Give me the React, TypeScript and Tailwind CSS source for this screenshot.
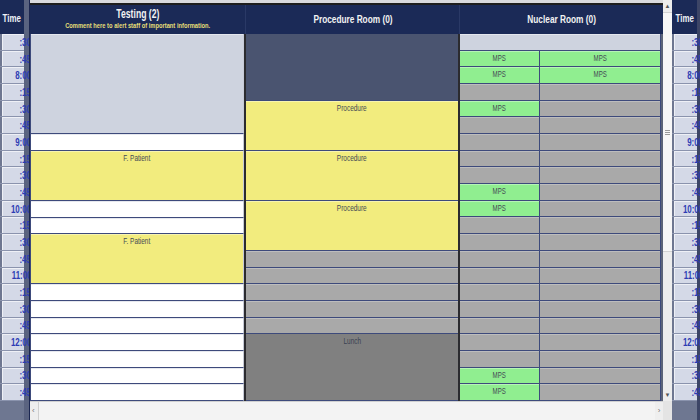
import React from "react";

type Kind = "idle" | "open" | "appt" | "blocked" | "closed" | "lunch" | "mps";
type Block = { span: number; kind: Kind; label?: string };

const TIMES = [":30", ":45", "8:00", ":15", ":30", ":45", "9:00", ":15", ":30", ":45", "10:00", ":15", ":30", ":45", "11:00", ":15", ":30", ":45", "12:00", ":15", ":30", ":45"];

const KIND_CLASS: Record<Kind, string> = {
  idle: "bg-[#ced3df] shadow-[inset_0_1px_0_#e4e7ee]",
  open: "bg-white shadow-[inset_0_1px_0_#e6e8ee]",
  appt: "bg-[#f2ec7e] shadow-[inset_0_1px_0_#f8f4b0]",
  blocked: "bg-[#4a5470]",
  closed: "bg-[#a9a9a9] shadow-[inset_0_1px_0_#bdbdbd]",
  lunch: "bg-[#808080]",
  mps: "bg-[#90ee90] shadow-[inset_0_1px_0_#b6f5b6]",
};

const SPAN_CLASS: Record<number, string> = {
  1: "row-span-1",
  3: "row-span-3",
  4: "row-span-4",
  6: "row-span-6",
};

const testing: Block[] = [
  { span: 6, kind: "idle" },
  { span: 1, kind: "open" },
  { span: 3, kind: "appt", label: "F. Patient" },
  { span: 1, kind: "open" },
  { span: 1, kind: "open" },
  { span: 3, kind: "appt", label: "F. Patient" },
  ...Array.from({ length: 7 }, (): Block => ({ span: 1, kind: "open" })),
];

const procedure: Block[] = [
  { span: 4, kind: "blocked" },
  { span: 3, kind: "appt", label: "Procedure" },
  { span: 3, kind: "appt", label: "Procedure" },
  { span: 3, kind: "appt", label: "Procedure" },
  ...Array.from({ length: 5 }, (): Block => ({ span: 1, kind: "closed" })),
  { span: 4, kind: "lunch", label: "Lunch" },
];

// nuclear room rows 1..21: which ones hold an MPS booking
const mpsLeft = [1, 2, 4, 9, 10, 20, 21];
const mpsRight = [1, 2];

// the app draws a condensed face; squeeze Liberation Sans to match
const Narrow = ({ children, className }: { children: React.ReactNode; className?: string }) => (
  <span className={`inline-block scale-x-[0.72] whitespace-nowrap ${className ?? ""}`}>{children}</span>
);

const Cell = ({ block, extra }: { block: Block; extra?: string }) => (
  <div
    className={`${SPAN_CLASS[block.span]} ${KIND_CLASS[block.kind]} ${extra ?? ""} flex justify-center overflow-hidden border-b border-[#3d4a7b] leading-none ${
      block.kind === "lunch" ? "text-[#3a4252]" : "text-[#454b55]"
    }`}
  >
    {block.label ? (
      <Narrow className={block.kind === "mps" ? "pt-[3px] text-[8.5px]" : "pt-[3px] text-[9px]"}>
        {block.label}
      </Narrow>
    ) : null}
  </div>
);

const TimeColumn = ({ side }: { side: "left" | "right" }) => (
  <div className="flex w-full flex-col">
    <div className="flex h-[34px] items-center justify-center overflow-hidden bg-[#1b2a57] pt-[3px] text-[11px] font-bold text-[#eef0f6]">
      <Narrow>Time</Narrow>
    </div>
    <div className="grid h-[367px] grid-rows-[repeat(22,minmax(0,1fr))]">
      {TIMES.map((t, i) => (
        <div key={i} className="border-b border-[#8a93ad] pl-[2px]">
          <div
            className={`flex h-full items-center justify-end overflow-hidden border-l border-t border-[#eef0f6] bg-[#d4d9e7] text-[11px] font-bold leading-none text-[#2d3cb4] ${
              side === "left" ? "pr-0" : "pr-[2px]"
            }`}
          >
            <Narrow className={side === "left" ? "-mr-[2px] origin-right" : "origin-right"}>{t}</Narrow>
          </div>
        </div>
      ))}
    </div>
    <div className="flex-1 bg-[#6e7791]" />
  </div>
);

export default function App() {
  return (
    <div className="flex h-[420px] w-[700px] overflow-hidden bg-[#6e7791] font-['Liberation_Sans',Arial,sans-serif]">
      <div className="w-[24px] shrink-0">
        <TimeColumn side="left" />
      </div>
      <div className="w-[6px] shrink-0 border-r border-[#1b2650] bg-[#5a6380]" />

      <div className="flex w-[633px] shrink-0 flex-col bg-[#ececec]">
        <div className="h-[5px] border-b-2 border-[#1e1e1e] bg-[#d9dadd]" />
        <div className="flex h-[29px] bg-[#1b2a57] text-[#f2f2f2]">
          <div className="flex w-[216px] flex-col items-center justify-center overflow-hidden border-r border-[#2a3966]">
            <Narrow className="text-[12px] font-bold leading-[13px]">Testing (2)</Narrow>
            <Narrow className="text-[8px] font-bold leading-[10px] text-[#e6df78]">
              Comment here to alert staff of important information.
            </Narrow>
          </div>
          <div className="flex w-[214px] items-center justify-center border-r border-[#2a3966] pt-[1px] text-[11.5px] font-bold">
            <Narrow>Procedure Room (0)</Narrow>
          </div>
          <div className="flex flex-1 items-center justify-center pt-[1px] text-[11.5px] font-bold">
            <Narrow>Nuclear Room (0)</Narrow>
          </div>
        </div>

        <div className="flex h-[367px]">
          <div className="grid w-[214px] grid-rows-[repeat(22,minmax(0,1fr))] border-l border-[#3d4a7b]">
            {testing.map((b, i) => (
              <Cell key={i} block={b} extra="border-r border-r-[#c6cad6]" />
            ))}
          </div>
          <div className="w-[2px] bg-[#2b2b2f]" />
          <div className="grid w-[212px] grid-rows-[repeat(22,minmax(0,1fr))]">
            {procedure.map((b, i) => (
              <Cell key={i} block={b} />
            ))}
          </div>
          <div className="w-[2px] bg-[#2b2b2f]" />
          <div className="grid w-[200px] grid-cols-[80px_minmax(0,1fr)] grid-rows-[repeat(22,minmax(0,1fr))]">
            <Cell block={{ span: 1, kind: "idle" }} extra="col-span-2" />
            {Array.from({ length: 21 }, (_, k) => {
              const row = k + 1;
              return (
                <React.Fragment key={row}>
                  <Cell
                    block={mpsLeft.includes(row) ? { span: 1, kind: "mps", label: "MPS" } : { span: 1, kind: "closed" }}
                    extra="border-r border-r-[#3d4a7b]"
                  />
                  <Cell
                    block={mpsRight.includes(row) ? { span: 1, kind: "mps", label: "MPS" } : { span: 1, kind: "closed" }}
                  />
                </React.Fragment>
              );
            })}
          </div>
          <div className="flex-1 border-l border-[#3d4a7b] bg-[#5c6478]" />
        </div>

        {/* horizontal scrollbar */}
        <div className="flex flex-1 items-center border-t border-[#d0d0d0] bg-[#eeeeee] text-[8px] text-[#777]">
          <span className="w-[8px] pl-[2px]">‹</span>
          <div className="h-full flex-1 border-l border-[#cfcfcf] bg-[#f3f3f3]" />
          <span className="w-[8px] text-center">›</span>
        </div>
      </div>

      {/* vertical scrollbar */}
      <div className="flex w-[9px] shrink-0 flex-col bg-[#ededed]">
        <div className="flex h-[12px] items-center justify-center text-[6px] text-[#555]">▲</div>
        <div className="flex h-[240px] items-center justify-center border-y border-[#d2d2d2] bg-[#f7f7f7]">
          <div className="flex w-[5px] flex-col gap-[1px]">
            <div className="h-px bg-[#9a9a9a]" />
            <div className="h-px bg-[#9a9a9a]" />
            <div className="h-px bg-[#9a9a9a]" />
          </div>
        </div>
        <div className="flex-1" />
        <div className="flex h-[12px] items-center justify-center text-[6px] text-[#555]">▼</div>
        <div className="h-[19px] bg-[#e4e4e4]" />
      </div>

      <div className="w-[25px] shrink-0">
        <TimeColumn side="right" />
      </div>
      <div className="w-[3px] shrink-0 bg-[#3c4566]" />
    </div>
  );
}
